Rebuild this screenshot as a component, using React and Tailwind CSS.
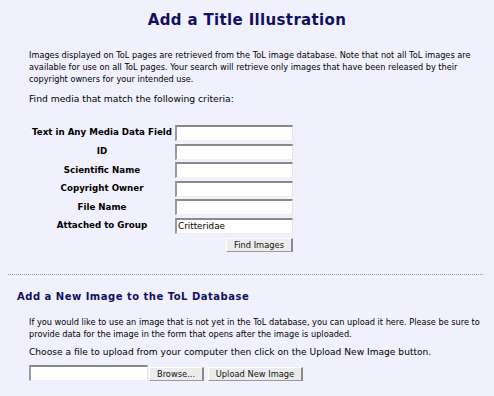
const fields = [
  { label: "Text in Any Media Data Field", value: "" },
  { label: "ID", value: "" },
  { label: "Scientific Name", value: "" },
  { label: "Copyright Owner", value: "" },
  { label: "File Name", value: "" },
  { label: "Attached to Group", value: "Critteridae" },
];

const inputCls =
  "h-[16px] bg-white border-t-2 border-l-2 border-t-[#8a8a8a] border-l-[#9a9a9a] border-r border-b border-r-[#e4e4e4] border-b-[#eeeeee] px-[1px] text-[8.8px] text-black outline-none";

const buttonCls =
  "h-[14px] bg-[#ececec] border-r-2 border-b border-r-[#8a8a8a] border-b-[#9a9a9a] border-t border-l border-t-white border-l-white text-[8.3px] leading-none text-[#111] px-0";

export default function App() {
  return (
    <div
      className="min-h-screen w-[494px] bg-[#f1f1fd] text-black"
      style={{ fontFamily: '"DejaVu Sans", Verdana, sans-serif' }}
    >
      <h1 className="pt-[11px] text-center text-[15px] font-bold leading-[18px] tracking-[0.35px] text-[#10105e]">
        Add a Title Illustration
      </h1>

      <p className="mt-[20px] ml-[29px] w-[452px] text-[8.2px] leading-[12px]">
        Images displayed on ToL pages are retrieved from the ToL image database. Note that not all ToL images are
        available for use on all ToL pages. Your search will retrieve only images that have been released by their
        copyright owners for your intended use.
      </p>

      <p className="mt-[8px] ml-[29px] text-[9.2px] leading-[12px]">
        Find media that match the following criteria:
      </p>

      <div className="mt-[20px] ml-[30px] grid grid-cols-[144px_118px] gap-x-[1px] gap-y-[2.6px]">
        {fields.map((f) => (
          <div key={f.label} className="contents">
            <div className="flex h-[16px] items-center justify-center text-[8.7px] font-bold">
              {f.label}
            </div>
            <input type="text" defaultValue={f.value} className={inputCls} />
          </div>
        ))}
      </div>

      <div className="mt-[4px] ml-[226px] flex">
        <button className={buttonCls + " w-[67px]"}>Find Images</button>
      </div>

      <div className="mt-[22px] ml-[8px] w-[475px] border-t border-dotted border-[#9a9a9a]" />

      <h2 className="mt-[15px] ml-[17px] text-[10px] font-bold leading-[14px] tracking-[0.5px] text-[#10105e]">
        Add a New Image to the ToL Database
      </h2>

      <p className="mt-[12px] ml-[29px] w-[458px] text-[8.2px] leading-[12px]">
        If you would like to use an image that is not yet in the ToL database, you can upload it here. Please be sure to
        provide data for the image in the form that opens after the image is uploaded.
      </p>

      <p className="mt-[6px] ml-[29px] text-[9.1px] leading-[12px]">
        Choose a file to upload from your computer then click on the Upload New Image button.
      </p>

      <div className="mt-[7px] ml-[29px] flex items-end">
        <input type="text" className={inputCls + " w-[119px]"} />
        <button className={buttonCls + " ml-[1px] w-[55px]"}>Browse...</button>
        <button className={buttonCls + " ml-[4px] w-[95px]"}>Upload New Image</button>
      </div>
    </div>
  );
}
